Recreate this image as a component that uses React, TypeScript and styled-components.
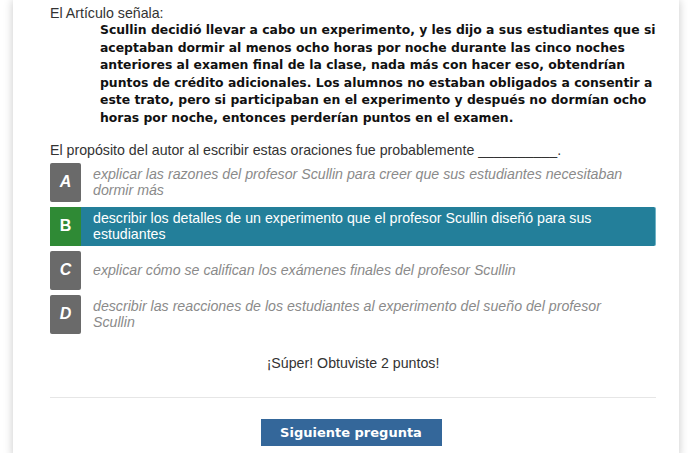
import React from "react";
import styled, { createGlobalStyle } from "styled-components";

const GlobalStyle = createGlobalStyle`
  html, body {
    margin: 0;
    padding: 0;
    background: #ffffff;
    overflow: hidden;
  }
`;

const Page = styled.div`
  padding: 0 9px 0 13px;
  height: 453px;
  box-sizing: border-box;
`;

const Card = styled.div`
  background: #fff;
  height: 100%;
  padding: 5px 23px 0 37px;
  box-shadow: 0 0 9px rgba(0, 0, 0, 0.22);
  font-family: "Liberation Sans", Arial, sans-serif;
  font-size: 14.2px;
  color: #333;
`;

const Intro = styled.div`
  line-height: 16px;
`;

const Quote = styled.div`
  margin-left: 50px;
  font-family: "DejaVu Sans", Verdana, sans-serif;
  font-weight: bold;
  font-size: 12.4px;
  line-height: 17.6px;
  color: #111;
`;

const Question = styled.div`
  margin-top: 14px;
  line-height: 18px;
`;

const Options = styled.div`
  display: flex;
  flex-direction: column;
  gap: 5px;
  margin-top: 4px;
`;

const Option = styled.div<{ $selected?: boolean }>`
  display: flex;
  align-items: center;
  min-height: 39px;
  background: ${(p) => (p.$selected ? "#237f9a" : "transparent")};
  border-right: 1px solid ${(p) => (p.$selected ? "#6fb3c6" : "transparent")};
  border-radius: 2px;
`;

const Letter = styled.div<{ $selected?: boolean }>`
  flex: 0 0 31px;
  align-self: stretch;
  display: flex;
  align-items: center;
  justify-content: center;
  background: ${(p) => (p.$selected ? "#2f8a35" : "#6a6a6a")};
  color: #fff;
  font-weight: bold;
  font-style: ${(p) => (p.$selected ? "normal" : "italic")};
  font-size: 16px;
  border-radius: ${(p) => (p.$selected ? "0" : "2px")};
`;

const OptionText = styled.div<{ $selected?: boolean }>`
  padding: 0 20px 0 12px;
  line-height: 16px;
  font-size: 14.2px;
  color: ${(p) => (p.$selected ? "#ffffff" : "#8a8a8a")};
  font-style: ${(p) => (p.$selected ? "normal" : "italic")};
`;

const Feedback = styled.div`
  margin-top: 20px;
  text-align: center;
  line-height: 18px;
`;

const Divider = styled.hr`
  border: 0;
  border-top: 1px solid #e6e6e6;
  margin: 25px 0 0;
`;

const Footer = styled.div`
  display: flex;
  justify-content: center;
  padding-top: 21px;
`;

const NextButton = styled.button`
  width: 181px;
  height: 27px;
  margin-left: -4px;
  border: 0;
  background: #34679a;
  color: #fff;
  font-family: "DejaVu Sans", Verdana, sans-serif;
  font-weight: bold;
  font-size: 13px;
  cursor: pointer;
`;

const options = [
  {
    letter: "A",
    text: "explicar las razones del profesor Scullin para creer que sus estudiantes necesitaban dormir más",
  },
  {
    letter: "B",
    text: "describir los detalles de un experimento que el profesor Scullin diseñó para sus estudiantes",
    selected: true,
  },
  {
    letter: "C",
    text: "explicar cómo se califican los exámenes finales del profesor Scullin",
  },
  {
    letter: "D",
    text: "describir las reacciones de los estudiantes al experimento del sueño del profesor Scullin",
  },
];

export default function App() {
  return (
    <>
      <GlobalStyle />
      <Page>
        <Card>
          <Intro>El Artículo señala:</Intro>
          <Quote>
            Scullin decidió llevar a cabo un experimento, y les dijo a sus
            estudiantes que si aceptaban dormir al menos ocho horas por noche
            durante las cinco noches anteriores al examen final de la clase,
            nada más con hacer eso, obtendrían puntos de crédito adicionales.
            Los alumnos no estaban obligados a consentir a este trato, pero si
            participaban en el experimento y después no dormían ocho horas por
            noche, entonces perderían puntos en el examen.
          </Quote>
          <Question>
            El propósito del autor al escribir estas oraciones fue
            probablemente __________.
          </Question>
          <Options>
            {options.map((o) => (
              <Option key={o.letter} $selected={o.selected}>
                <Letter $selected={o.selected}>{o.letter}</Letter>
                <OptionText $selected={o.selected}>{o.text}</OptionText>
              </Option>
            ))}
          </Options>
          <Feedback>¡Súper! Obtuviste 2 puntos!</Feedback>
          <Divider />
          <Footer>
            <NextButton>Siguiente pregunta</NextButton>
          </Footer>
        </Card>
      </Page>
    </>
  );
}
